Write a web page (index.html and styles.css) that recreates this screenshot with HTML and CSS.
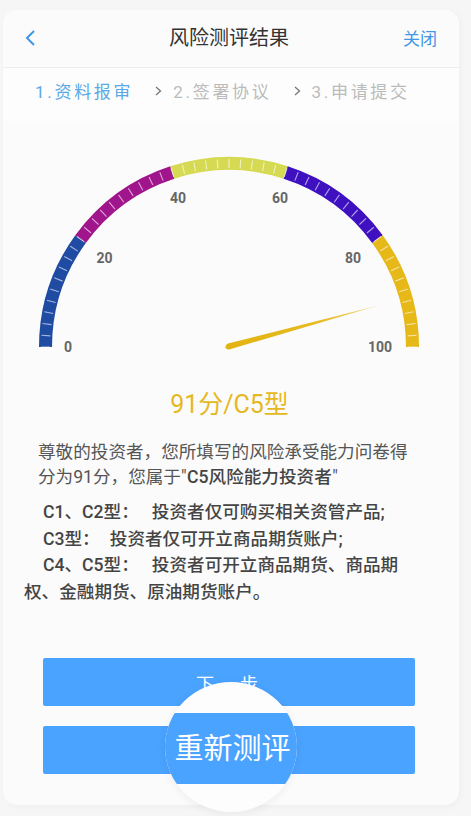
FILE: index.html
```html
<!DOCTYPE html>
<html lang="zh-CN">
<head>
<meta charset="utf-8">
<title>风险测评结果</title>
<link rel="stylesheet" href="styles.css">
</head>
<body>
<main class="card">
  <header class="topbar">
    <svg class="back" viewBox="0 0 12 18" width="12" height="18"><path d="M10 2 3 9l7 7"/></svg>
    <h1 class="title">风险测评结果</h1>
    <span class="close">关闭</span>
  </header>
  <nav class="steps">
    <span class="step active">1.资料报审</span>
    <svg class="chev" viewBox="0 0 7 10" width="7" height="10"><path d="M1 1l4.5 4L1 9"/></svg>
    <span class="step">2.签署协议</span>
    <svg class="chev" viewBox="0 0 7 10" width="7" height="10"><path d="M1 1l4.5 4L1 9"/></svg>
    <span class="step">3.申请提交</span>
  </nav>
  <svg class="gauge" viewBox="3 140 456 225" width="456" height="225">
    <defs>
      <linearGradient id="needle" gradientUnits="userSpaceOnUse" x1="226" y1="348" x2="380" y2="305">
        <stop offset="0" stop-color="#e2b410"/>
        <stop offset="0.6" stop-color="#e6bb20"/>
        <stop offset="1" stop-color="#f0dc90"/>
      </linearGradient>
    </defs>
    <path class="seg seg-blue" d="M45.5 347A183.5 183.5 0 0 1 80.55 239.14"/>
    <path class="seg seg-purple" d="M80.55 239.14A183.5 183.5 0 0 1 172.3 172.5"/>
    <path class="seg seg-lime" d="M172.3 172.5A183.5 183.5 0 0 1 285.7 172.5"/>
    <path class="seg seg-indigo" d="M285.7 172.5A183.5 183.5 0 0 1 377.45 239.14"/>
    <path class="seg seg-gold" d="M377.45 239.14A183.5 183.5 0 0 1 412.5 347"/>
    <path class="ticks" pathLength="100" d="M45.5 347A183.5 183.5 0 0 1 412.5 347"/>
    <text class="num" x="68" y="352">0</text>
    <text class="num" x="104.5" y="263">20</text>
    <text class="num" x="178" y="203">40</text>
    <text class="num" x="280" y="203">60</text>
    <text class="num" x="353" y="263">80</text>
    <text class="num" x="380" y="352">100</text>
    <path class="needle" fill="url(#needle)" d="M380 305 228 343.5Q225 345 225.5 348Q227 350 230 349.2Z"/>
  </svg>
  <div class="score">91分/C5型</div>
  <p class="intro">尊敬的投资者，您所填写的风险承受能力问卷得分为91分，您属于"<b>C5风险能力投资者</b>"</p>
  <div class="notes">
    <p class="note">C1、C2型：&nbsp;&nbsp;&nbsp;投资者仅可购买相关资管产品;</p>
    <p class="note tight">C3型：&nbsp;&nbsp;&nbsp;投资者仅可开立商品期货账户;</p>
    <p class="note">C4、C5型：&nbsp;&nbsp;&nbsp;投资者可开立商品期货、商品期权、金融期货、原油期货账户。</p>
  </div>
  <div class="actions">
    <button class="btn next" type="button">下一步</button>
    <button class="btn" type="button" aria-label="重新测评"></button>
  </div>
  <div class="lens">
    <div class="lens-band">重新测评</div>
  </div>
</main>
</body>
</html>
```
FILE: styles.css
```css
* { box-sizing: border-box; }
html, body { margin: 0; padding: 0; }
body {
  width: 471px;
  height: 816px;
  overflow: hidden;
  background: #f6f6f6;
  font-family: Roboto, "Noto Sans CJK SC", sans-serif;
}
.card {
  position: relative;
  width: 456px;
  height: 795px;
  margin: 10px 0 0 3px;
  background: #fbfbfb;
  border-radius: 14px;
  box-shadow: 2px 2px 6px rgba(0,0,0,.03);
}
.topbar {
  height: 58px;
  padding-bottom: 4px;
  display: flex;
  align-items: center;
  justify-content: center;
  position: relative;
  border-bottom: 1px solid #eceef0;
}
.back {
  position: absolute;
  left: 21px;
  top: 19px;
  fill: none;
  stroke: #3f97e6;
  stroke-width: 2;
}
.title {
  margin: 0 4px 0 0;
  font-size: 20px;
  font-weight: 400;
  color: #333;
}
.close {
  position: absolute;
  right: 22px;
  top: 15px;
  font-size: 17px;
  color: #3f97e6;
}
.steps {
  height: 53px;
  padding: 0 0 8px 32px;
  display: flex;
  align-items: center;
  background: #fdfdfd;
}
.step {
  font-size: 17px;
  letter-spacing: 2.7px;
  color: #bbb;
  white-space: nowrap;
}
.step.active { color: #5aa9e6; }
.chev {
  margin: 0 11px 0 22px;
  fill: none;
  stroke: #777;
  stroke-width: 1.3;
}
.gauge {
  display: block;
  margin-top: 19px;
}
.seg { fill: none; stroke-width: 13; }
.seg-blue { stroke: #1f4ba2; }
.seg-purple { stroke: #a0148c; }
.seg-lime { stroke: #d6da52; }
.seg-indigo { stroke: #3f10c0; }
.seg-gold { stroke: #e6b818; }
.ticks {
  fill: none;
  stroke: #fff;
  stroke-opacity: .6;
  stroke-width: 9;
  stroke-dasharray: .2 1.8;
  stroke-dashoffset: .1;
}
.num {
  font-size: 14px;
  font-weight: 700;
  fill: #666;
  text-anchor: middle;
}
.score {
  margin-top: 23px;
  height: 34px;
  line-height: 34px;
  font-size: 25px;
  text-align: center;
  color: #e6b81f;
  padding-right: 3px;
}
.intro {
  margin: 18px 0 0;
  padding: 0 44px 0 35px;
  font-size: 17.6px;
  line-height: 25px;
  color: #555;
}
.intro b { font-weight: 500; color: #444; margin: 0 .5px; }
.notes {
  margin-top: 9px;
  padding: 0 40px 0 21px;
}
.note {
  margin: 0;
  font-size: 17.6px;
  line-height: 26.5px;
  font-weight: 500;
  color: #444;
  text-indent: 19px;
}
.note.tight { word-spacing: -1px; }
.actions {
  position: absolute;
  left: 40px;
  right: 44px;
  top: 648px;
  display: flex;
  flex-direction: column;
  gap: 20px;
}
.btn {
  height: 48px;
  border: 0;
  border-radius: 2px;
  background: #4aa3ff;
  color: #fff;
  font: inherit;
  font-size: 18px;
  letter-spacing: 4px;
}
.btn.next { padding-top: 2px; }
.lens {
  position: absolute;
  left: 162px;
  top: 672px;
  width: 132px;
  height: 130px;
  border-radius: 50%;
  overflow: hidden;
  background: #fdfdfd;
  box-shadow: 0 2px 10px rgba(0,0,0,.06);
  padding-top: 31px;
}
.lens-band {
  height: 71px;
  line-height: 72px;
  padding-left: 3px;
  background: #4aa3ff;
  color: #fff;
  font-size: 29px;
  text-align: center;
  white-space: nowrap;
}
```
